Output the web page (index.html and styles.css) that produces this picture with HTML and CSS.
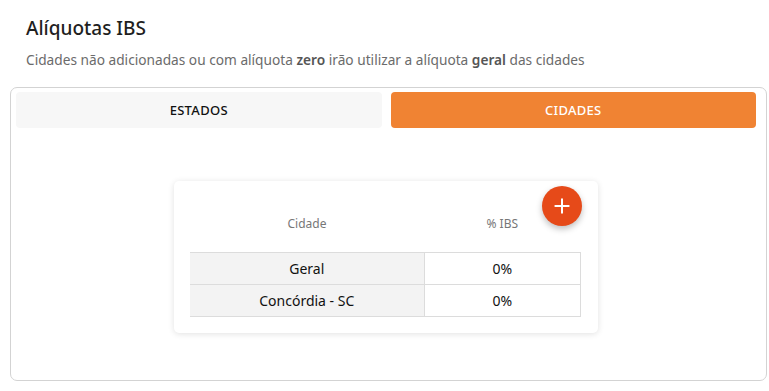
FILE: index.html
```html
<!DOCTYPE html>
<html lang="pt-BR">
<head>
    <meta charset="UTF-8">
    <meta name="viewport" content="width=device-width, initial-scale=1.0">
    <title>Alíquotas IBS</title>
    <link rel="stylesheet" href="styles.css">
</head>
<body>
    <div class="page">
        <h1>Alíquotas IBS</h1>
        <p class="subtitle">Cidades não adicionadas ou com alíquota <b>zero</b> irão utilizar a alíquota <b>geral</b> das cidades</p>

        <div class="panel">
            <div class="tabs">
                <button class="tab">ESTADOS</button>
                <button class="tab active">CIDADES</button>
            </div>

            <div class="tab-body">
                <div class="card">
                    <button class="fab" title="Adicionar cidade">
                        <svg viewBox="0 0 24 24" width="20" height="20">
                            <path d="M12 4v16M4 12h16" stroke="#fff" stroke-width="2.4" stroke-linecap="round" fill="none"></path>
                        </svg>
                    </button>
                    <table class="rates">
                        <colgroup>
                            <col class="col-city">
                            <col>
                        </colgroup>
                        <thead>
                            <tr>
                                <th>Cidade</th>
                                <th>% IBS</th>
                            </tr>
                        </thead>
                        <tbody>
                            <tr>
                                <td class="city">Geral</td>
                                <td class="rate">0%</td>
                            </tr>
                            <tr>
                                <td class="city">Concórdia - SC</td>
                                <td class="rate">0%</td>
                            </tr>
                        </tbody>
                    </table>
                </div>
            </div>
        </div>
    </div>
</body>
</html>
```

FILE: styles.css
```css
* {
    margin: 0;
    padding: 0;
    box-sizing: border-box;
    font-family: 'Noto Sans', 'Lato', sans-serif;
}

body {
    background: #fff;
    color: #222;
}

.page {
    padding: 16px 2px 0 10px;
    width: 769px;
}

h1 {
    font-size: 19px;
    font-weight: 500;
    color: #1f1f1f;
    margin-left: 16px;
    line-height: 24px;
}

.subtitle {
    margin: 10px 0 0 16px;
    font-size: 13.7px;
    color: #6b6b6b;
    line-height: 20px;
}

.subtitle b {
    color: #555;
    font-weight: 600;
}

.panel {
    margin-top: 17px;
    width: 757px;
    height: 294px;
    border: 1px solid #d3d3d3;
    border-radius: 7px;
    padding: 4px 10px 0 5px;
    display: flex;
    flex-direction: column;
}

.tabs {
    display: flex;
    gap: 9px;
}

.tab {
    flex: 1;
    height: 36px;
    border: none;
    border-radius: 4px;
    background: #f7f7f7;
    color: #111;
    font-size: 13px;
    font-weight: 500;
    letter-spacing: 0.3px;
    cursor: pointer;
}

.tab.active {
    background: #f08333;
    color: #fff;
}

.tab-body {
    display: flex;
    justify-content: center;
    padding-top: 53px;
}

.card {
    position: relative;
    width: 424px;
    padding: 15px 17px 16px 16px;
    background: #fff;
    border-radius: 5px;
    box-shadow: 0 1px 6px rgba(0, 0, 0, 0.12);
}

.fab {
    position: absolute;
    top: 5px;
    right: 16px;
    width: 40px;
    height: 40px;
    border: none;
    border-radius: 50%;
    background: #e64a19;
    box-shadow: 0 3px 6px rgba(0, 0, 0, 0.25);
    display: flex;
    align-items: center;
    justify-content: center;
    cursor: pointer;
}

.rates {
    width: 100%;
    border-collapse: collapse;
    table-layout: fixed;
}

.rates .col-city {
    width: 234px;
}

.rates th {
    height: 56px;
    font-size: 12px;
    font-weight: 400;
    color: #777;
    text-align: center;
    vertical-align: middle;
}

.rates td {
    height: 32px;
    font-size: 14px;
    color: #111;
    text-align: center;
    border-top: 1px solid #dcdcdc;
    border-bottom: 1px solid #dcdcdc;
}

.rates td.city {
    background: #f3f3f3;
}

.rates td.rate {
    background: #fff;
    border-left: 1px solid #dcdcdc;
    border-right: 1px solid #dcdcdc;
}
```
